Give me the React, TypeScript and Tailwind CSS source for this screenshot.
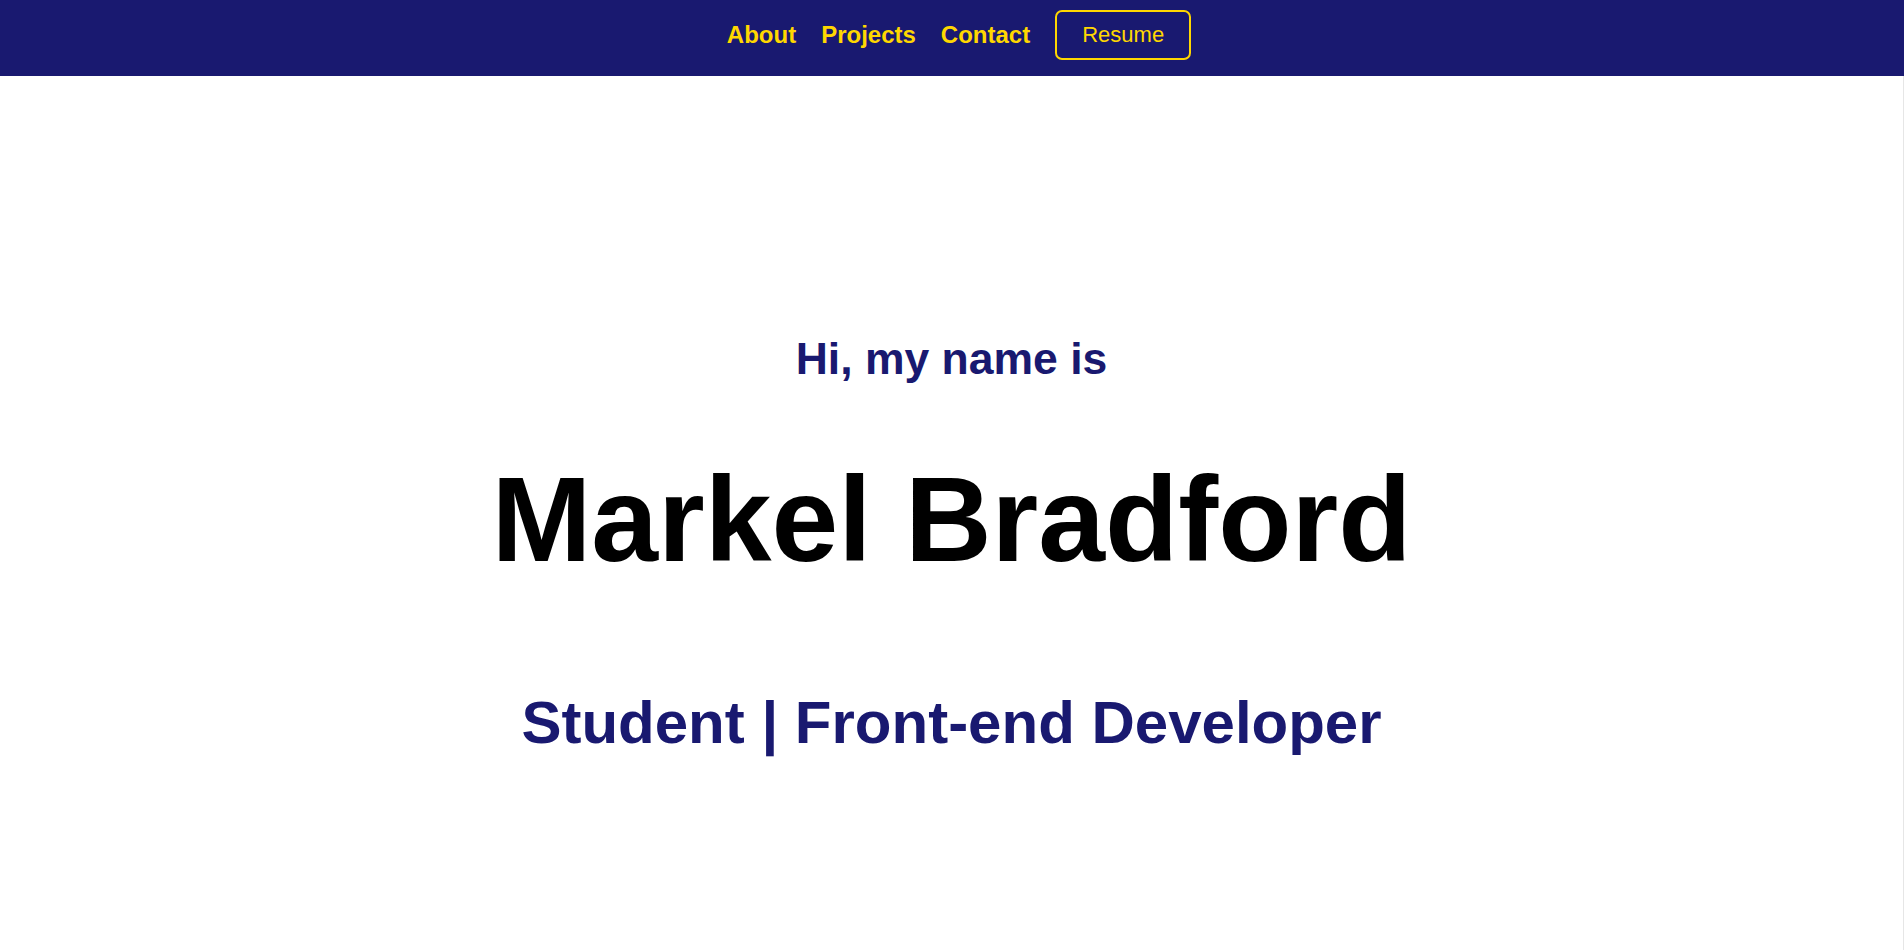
import React from 'react';

const links = ['About', 'Projects', 'Contact'];

function NavBar() {
  return (
    <nav className="h-[76px] w-full bg-[#191970] flex items-center justify-center pb-[7px] pl-[14px]">
      <ul className="flex items-center gap-[25px]">
        {links.map((link) => (
          <li key={link}>
            <a href={`#${link.toLowerCase()}`} className="text-[24px] font-bold text-[#ffd700] no-underline">
              {link}
            </a>
          </li>
        ))}
        <li>
          <button
            type="button"
            className="w-[136px] h-[50px] flex items-center justify-center border-2 border-[#ffd700] rounded-[7px] text-[22px] text-[#ffd700] bg-transparent"
          >
            Resume
          </button>
        </li>
      </ul>
    </nav>
  );
}

export default function App() {
  return (
    <div className="min-h-[950px] bg-white font-['Liberation_Sans',Arial,sans-serif]">
      <NavBar />
      {/* hero */}
      <main className="min-h-[874px] border-r border-[#e6e6e6] flex flex-col items-center pt-[261px] text-center">
        <h2 className="text-[44.5px] leading-[44px] font-bold text-[#191970]">Hi, my name is</h2>
        <h1 className="mt-[78px] text-[120px] leading-[120px] font-bold text-black">Markel Bradford</h1>
        <h3 className="mt-[114px] text-[60px] leading-[60px] font-bold text-[#191970]">
          Student | Front-end Developer
        </h3>
      </main>
    </div>
  );
}
